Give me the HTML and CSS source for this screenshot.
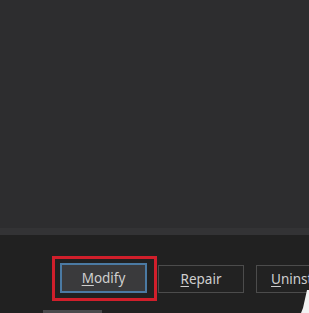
FILE: index.html
```html
<!DOCTYPE html>
<html lang="en">
<head>
    <meta charset="UTF-8">
    <meta name="viewport" content="width=device-width, initial-scale=1.0">
    <title>Modify</title>
    <link rel="stylesheet" href="styles.css">
</head>
<body>
    <div class="main"></div>
    <div class="band"></div>
    <div class="footer">
        <div class="actions">
            <div class="highlight">
                <button class="btn btn-primary"><u>M</u>odify</button>
            </div>
            <button class="btn"><u>R</u>epair</button>
            <button class="btn btn-uninstall"><u>U</u>ninstall</button>
        </div>
        <div class="strip"></div>
        <svg class="cursor" width="8" height="23" viewBox="0 0 8 23">
            <polygon points="6,0 8,0 8,23 0,23 2,18" fill="#f2f2f2"/>
        </svg>
    </div>
</body>
</html>
```

FILE: styles.css
```css
body {
    margin: 0;
    width: 309px;
    height: 313px;
    overflow: hidden;
    background-color: #2d2d2f;
    font-family: "Noto Sans", "Open Sans", sans-serif;
}
.main {
    height: 228px;
    background-color: #2d2d2f;
}
.band {
    height: 7px;
    background-color: #333335;
}
.footer {
    position: relative;
    height: 78px;
    box-sizing: border-box;
    padding-top: 21px;
    padding-left: 52px;
    background-color: #212121;
}
.actions {
    display: flex;
    align-items: center;
    white-space: nowrap;
}
.highlight {
    border: 3px solid #d01f2b;
    padding: 4px 7px 5px 5px;
    margin-right: 1px;
}
.btn {
    width: 86px;
    height: 28px;
    padding: 0;
    border: 1px solid #4c4c4c;
    background-color: #222222;
    color: #cfcfcf;
    font-family: inherit;
    font-size: 13.5px;
    flex-shrink: 0;
}
.btn u {
    text-decoration-thickness: 1px;
    text-underline-offset: 2px;
}
.btn-primary {
    width: 87px;
    height: 30px;
    border: 2px solid #4b7aa3;
    background-color: #3a3a3c;
}
.btn-uninstall {
    margin-left: 12px;
}
.strip {
    width: 59px;
    height: 3px;
    margin-top: 9px;
    margin-left: -9px;
    background-color: #4a4a4c;
}
.cursor {
    position: absolute;
    right: 0;
    bottom: 0;
}
```
